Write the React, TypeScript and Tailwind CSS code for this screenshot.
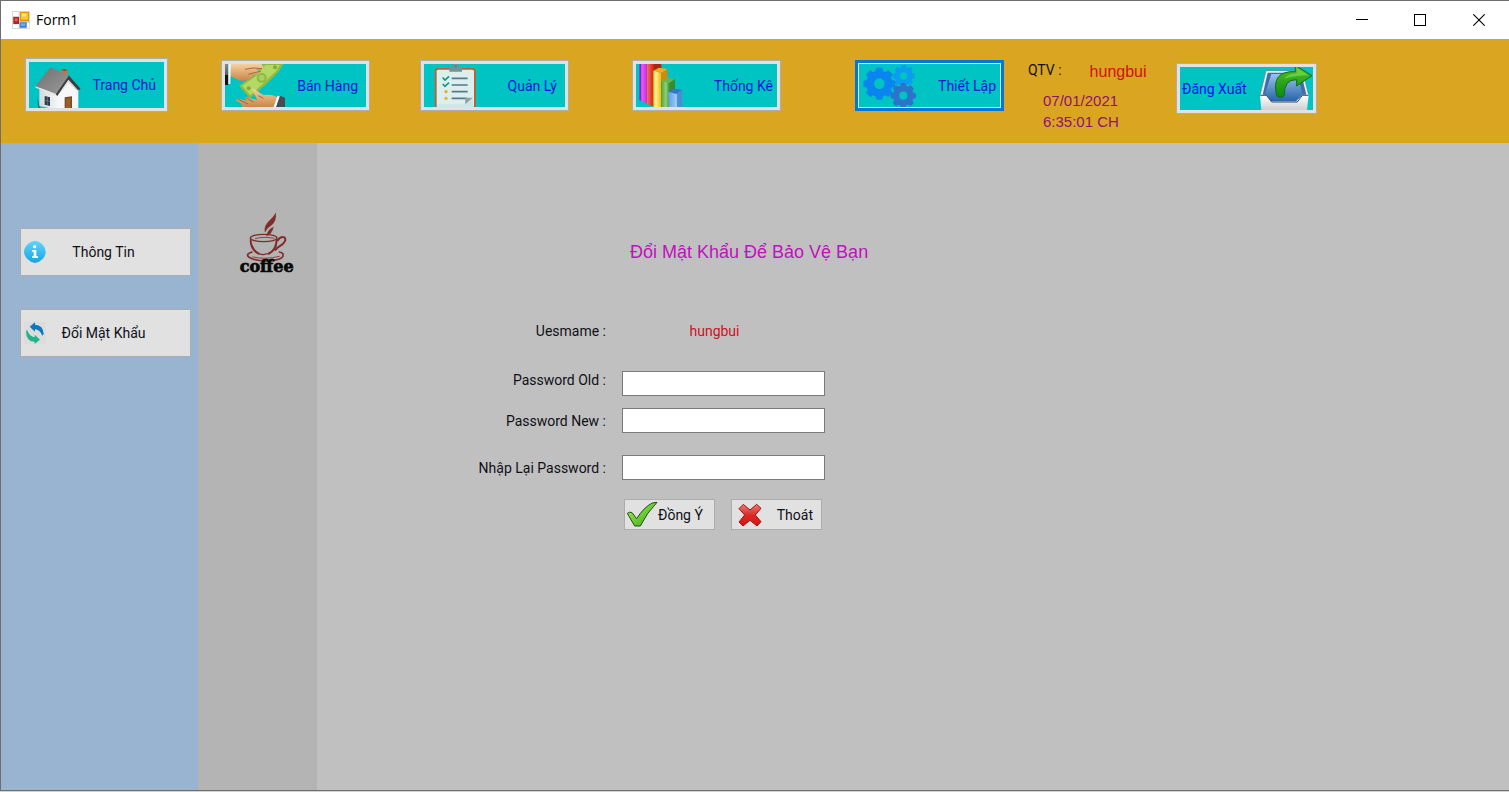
import type { ReactNode } from "react";

function AppIcon() {
  return (
    <svg className="h-[18px] w-[18px]" viewBox="36 30 54 54" aria-hidden="true">
      <rect x="36" y="30" width="54" height="54" rx="4" fill="#d4d4d4" />
      <rect x="39" y="33" width="17" height="12" fill="#fff" />
      <rect x="39" y="70" width="17" height="11" fill="#fff" />
      <rect x="80" y="66" width="8" height="15" fill="#fff" />
      <rect x="40" y="48" width="17" height="21" fill="#b3201e" />
      <rect x="44" y="52" width="9" height="9" fill="#e2605c" />
      <rect x="60" y="33" width="27" height="28" fill="#d99a06" />
      <rect x="63" y="36" width="21" height="20" fill="#fbc82c" />
      <rect x="66" y="38" width="12" height="9" fill="#ffe07a" />
      <rect x="59" y="64" width="21" height="16" fill="#3b78d8" />
      <rect x="62" y="67" width="14" height="8" fill="#74a8f3" />
    </svg>
  );
}

function HouseIcon() {
  return (
    <svg className="h-[46px] w-14 shrink-0" viewBox="87 186 168 138" aria-hidden="true">
      <defs>
        <linearGradient id="roof" x1="0" y1="0" x2="1" y2="1">
          <stop offset="0" stopColor="#6f6f6f" />
          <stop offset="1" stopColor="#9a9a9a" />
        </linearGradient>
        <linearGradient id="wall" x1="0" y1="0" x2="1" y2="0">
          <stop offset="0" stopColor="#d4d8da" />
          <stop offset="1" stopColor="#f8f8f8" />
        </linearGradient>
      </defs>
      <path d="M111 290 l10 34 h-6z" fill="#087a7c" />
      <path d="M184 210 l8 -3 11 3 v22 l-19 -8z" fill="#b97a4b" />
      <path d="M184 210 l8 -3 11 3 -9 4z" fill="#8c4f2b" />
      <path d="M118 258 L178 275 V330 L118 318z" fill="url(#wall)" />
      <path d="M172 278 L206 237 L235 268 V330 H172z" fill="#f7f7f7" />
      <path d="M206 226 L242 267 L234 271 L205 239 L172 288 L166 282z" fill="#3d3d3d" />
      <path d="M206 240 L232 269 L231 272 L205 246 L176 288z" fill="#d0d0d0" />
      <path d="M152 202 L206 227 L168 282 L106 259z" fill="url(#roof)" />
      <path d="M106 259 L168 282 L167 287 L107 263z" fill="#e4e4e4" />
      <path d="M134 288 l16 4 v26 l-16 -4z" fill="#2d3a4a" />
      <path d="M142 290 v26 M134 301 l16 4" stroke="#8f9aa5" strokeWidth="1.5" />
      <path d="M194 292 l22 -3 v38 h-22z" fill="#7b4a1f" />
      <path d="M198 296 l14 -2 v32 h-14z" fill="#94602d" />
    </svg>
  );
}

function CashIcon() {
  return (
    <svg className="h-[43px] w-[60px] shrink-0" viewBox="75 57 180 129" aria-hidden="true">
      <defs>
        <linearGradient id="skin" x1="0" y1="0" x2="0" y2="1">
          <stop offset="0" stopColor="#f6cfa0" />
          <stop offset="1" stopColor="#c98547" />
        </linearGradient>
        <linearGradient id="cuff" x1="0" y1="0" x2="0" y2="1">
          <stop offset="0" stopColor="#8a8a8a" />
          <stop offset="1" stopColor="#2d2d2d" />
        </linearGradient>
      </defs>
      <path d="M190 55 H251 L238 78 L205 112 L150 160 L117 122 L170 85z" fill="#8fbc3e" />
      <path d="M196 60 H240 L229 77 L197 108 L151 151 L126 122 L172 90z" fill="#b3d864" />
      <circle cx="185" cy="99" r="15" fill="#8dba42" />
      <circle cx="185" cy="98" r="9" fill="#a9d05c" />
      <circle cx="225" cy="67" r="6" fill="#7fae35" />
      <circle cx="146" cy="130" r="6" fill="#7fae35" />
      <path d="M92 57 H184 Q194 65 188 72 L168 74 L184 80 Q180 90 160 89 L155 98 Q135 112 116 106 L92 94z" fill="url(#skin)" />
      <path d="M135 73 Q160 66 186 71 M145 88 Q165 82 182 79" fill="none" stroke="#a96634" strokeWidth="3" />
      <path d="M75 57 H84 V120 H75z" fill="url(#cuff)" />
      <path d="M75 90 H85 V120 H75z" fill="#111" />
      <path d="M85 57 H93 L91 117 H85z" fill="#f4f4f4" />
      <path d="M155 133 Q160 128 170 137 L190 150 Q218 146 234 158 L224 187 H136 Q118 184 126 177 L110 168 Q106 160 116 161 L140 168 L134 157 Q138 152 150 160 L172 164z" fill="url(#skin)" />
      <path d="M112 162 L144 177 M136 157 L160 171 M175 152 L190 160" stroke="#a96634" strokeWidth="3" fill="none" />
      <path d="M232 152 L240 154 L228 187 H221z" fill="#fff" />
      <path d="M240 152 L255 158 V187 H228z" fill="#474b52" />
    </svg>
  );
}

function ClipboardIcon() {
  return (
    <svg className="h-[43px] w-[60px] shrink-0" viewBox="72 57 180 129" aria-hidden="true">
      <rect x="104" y="69" width="124" height="128" rx="11" fill="#b4653a" />
      <rect x="110" y="74" width="112" height="113" rx="5" fill="#dcefed" />
      <path d="M112 178 H196 L219 158 V188 H112z" fill="#cfe6e4" />
      <path d="M148 80 V69 Q148 64 156 64 Q158 56 167 56 Q176 56 178 64 Q186 64 186 69 V80z" fill="#7d8f93" />
      <circle cx="167" cy="64" r="4" fill="#0aa9aa" />
      <path d="M128 98 l7 7 12 -11 M128 117 l7 7 12 -11" fill="none" stroke="#119b7c" strokeWidth="5" />
      <circle cx="138" cy="140" r="5" fill="#e2b32d" />
      <circle cx="138" cy="160" r="5" fill="#e2b32d" />
      <path d="M155 100 H203 M155 120 H203 M155 140 H203 M155 160 H200" stroke="#56798d" strokeWidth="5" />
      <path d="M195 158 H218 L196 178z" fill="#8ea1a5" />
    </svg>
  );
}

function BarsIcon() {
  return (
    <svg className="h-[43px] w-[60px] shrink-0" viewBox="78 57 180 129" aria-hidden="true">
      <defs>
        <linearGradient id="violet"><stop offset="0" stopColor="#a90ed0" /><stop offset=".3" stopColor="#e35cf5" /><stop offset="1" stopColor="#c42ae0" /></linearGradient>
        <linearGradient id="red"><stop offset="0" stopColor="#f2705c" /><stop offset="1" stopColor="#cf2212" /></linearGradient>
        <linearGradient id="yellow"><stop offset="0" stopColor="#ffd500" /><stop offset=".3" stopColor="#fff3a0" /><stop offset="1" stopColor="#f4b600" /></linearGradient>
        <linearGradient id="green"><stop offset="0" stopColor="#4da531" /><stop offset=".6" stopColor="#93cf79" /><stop offset="1" stopColor="#3d9426" /></linearGradient>
        <linearGradient id="blue"><stop offset="0" stopColor="#5ba0e4" /><stop offset="1" stopColor="#9cc8f3" /></linearGradient>
      </defs>
      <path d="M90 57 H111 V176 L90 166z" fill="url(#violet)" />
      <path d="M90 57 V166" stroke="#8d12b3" strokeWidth="3" />
      <path d="M111 57 H132 V185 L111 177z" fill="url(#red)" />
      <path d="M132 57 H154 V72 L132 78z" fill="#a92614" />
      <path d="M130 77 L147 68 L172 72 L156 84z" fill="#f7a81e" />
      <path d="M130 77 L154 84 V187 H130z" fill="url(#yellow)" />
      <path d="M154 84 L172 72 V105 L154 114z" fill="#d58a07" />
      <path d="M153 108 L172 98 L195 102 L178 114z" fill="#6ab64d" />
      <path d="M153 108 L178 114 V187 H153z" fill="url(#green)" />
      <path d="M178 114 L195 102 V133 L178 142z" fill="#3a8a28" />
      <path d="M174 140 L190 131 L217 134 L199 147z" fill="#3676c4" />
      <path d="M174 140 L199 147 V187 H176z" fill="url(#blue)" />
      <path d="M199 147 L217 134 V187 H199z" fill="#4a8fd6" />
      <path d="M199 147 V187" stroke="#d7ebff" strokeWidth="2" />
    </svg>
  );
}

const TEETH = [0, 45, 90, 135, 180, 225, 270, 315];

function Gear({ x, y, r, hole, color }: { x: number; y: number; r: number; hole: number; color: string }) {
  const band = (r * 0.8 + hole) / 2;
  return (
    <g transform={`translate(${x} ${y})`}>
      <circle r={band} fill="none" stroke={color} strokeWidth={r * 0.84 - hole} />
      {TEETH.map((a) => (
        <rect key={a} x={-r * 0.22} y={-r} width={r * 0.44} height={r * 0.32} rx={r * 0.1} fill={color} transform={`rotate(${a})`} />
      ))}
    </g>
  );
}

function GearsIcon() {
  return (
    <svg className="h-[43px] w-[60px] shrink-0" viewBox="57 57 180 129" aria-hidden="true">
      <Gear x={191} y={93} r={33} hole={12} color="#0d9cf0" />
      <Gear x={118} y={116} r={48} hole={17} color="#0a84ee" />
      <Gear x={190} y={152} r={38} hole={13} color="#2a74cc" />
    </svg>
  );
}

function LogoutIcon() {
  return (
    <svg className="h-[43px] w-[54px] shrink-0" viewBox="297 65 162 129" aria-hidden="true">
      <defs>
        <linearGradient id="tray" x1="0" y1="0" x2="0" y2="1">
          <stop offset="0" stopColor="#9cc3ea" />
          <stop offset="1" stopColor="#2563ab" />
        </linearGradient>
        <linearGradient id="box" x1="0" y1="0" x2="0" y2="1">
          <stop offset="0" stopColor="#ffffff" />
          <stop offset="1" stopColor="#cfcfcf" />
        </linearGradient>
        <linearGradient id="arrow" x1="0" y1="0" x2="0" y2="1">
          <stop offset="0" stopColor="#4fc424" />
          <stop offset="1" stopColor="#0c8a12" />
        </linearGradient>
      </defs>
      <path d="M318 76 H428 L446 150 L425 172 H322 L300 150z" fill="#eceff2" stroke="#5c7f93" strokeWidth="2" />
      <path d="M323 82 H423 L439 148 H308z" fill="#3a6fab" />
      <path d="M334 86 H412 L428 148 L408 168 H334 L314 148z" fill="url(#tray)" />
      <path d="M300 150 H319 L335 170 H412 L427 150 H446 L441 194 H304z" fill="url(#box)" />
      <path d="M301 150 H319 L335 170 H412 L427 150 H445" fill="none" stroke="#2f4e70" strokeWidth="3" />
      <path d="M406 60 L456 91 L410 122 V103 Q371 102 373 150 Q366 160 350 152 Q332 75 406 79z" fill="url(#arrow)" stroke="#087113" strokeWidth="3" />
      <path d="M410 68 L446 90 Q420 90 372 100 Q385 84 410 84z" fill="#9cec6a" opacity=".45" />
    </svg>
  );
}

function CoffeeLogo() {
  return (
    <svg className="h-[64px] w-[58px]" viewBox="717 36 174 192" role="img" aria-label="coffee">
      <g fill="none" stroke="#7f2d29" strokeLinecap="round">
        <path d="M827 40 Q820 52 808 62 Q791 78 795 96 Q800 84 814 76 Q830 64 827 40z" fill="#7f2d29" strokeWidth="1" />
        <path d="M820 82 Q803 88 800 108 Q816 102 820 82z" fill="#7f2d29" strokeWidth="1" />
        <ellipse cx="791" cy="114" rx="40" ry="11" strokeWidth="4" />
        <path d="M766 116 Q790 108 822 115" strokeWidth="2.5" />
        <path d="M752 120 Q752 148 776 161 M830 120 Q829 148 807 161" strokeWidth="6" />
        <path d="M757 138 Q764 162 790 164 Q822 160 828 136" strokeWidth="4" />
        <path d="M833 121 Q842 108 853 112 Q862 120 846 134 Q832 142 826 150" strokeWidth="6" />
        <path d="M756 156 Q736 162 746 171 Q764 183 797 183 Q838 182 848 170 Q853 158 838 156" strokeWidth="5" />
        <path d="M758 171 Q795 180 838 169" strokeWidth="2.5" />
      </g>
      <text x="719" y="217" fontFamily="'DejaVu Serif', serif" fontWeight="900" fontSize="48" fill="#080808" stroke="#080808" strokeWidth="2">
        coffee
      </text>
    </svg>
  );
}

function InfoIcon() {
  return (
    <svg className="h-6 w-6" viewBox="69 119 72 72" aria-hidden="true">
      <defs>
        <linearGradient id="info" x1="0" y1="0" x2="0" y2="1">
          <stop offset="0" stopColor="#63d4fb" />
          <stop offset="1" stopColor="#14a6e4" />
        </linearGradient>
      </defs>
      <path d="M105 121 Q116 121 127 132 Q137 143 137 155 Q137 166 127 177 Q116 188 105 188 Q94 188 83 177 Q72 166 72 155 Q72 143 83 132 Q94 121 105 121z" fill="url(#info)" />
      <circle cx="104" cy="139" r="5" fill="#fff" />
      <path d="M96 149 H109 V168 H114 V173 H96 V168 H101 V154 H96z" fill="#fff" />
    </svg>
  );
}

function SyncIcon() {
  return (
    <svg className="h-6 w-6" viewBox="69 362 72 72" aria-hidden="true">
      <rect x="73" y="365" width="64" height="66" fill="#dcdcdc" />
      <path d="M89 379 L105 366 V373 Q130 374 131 401 L127 406 Q120 388 105 386 V394z" fill="#0c78bf" />
      <path d="M120 418 L104 431 V424 Q79 424 78 394 L81 388 Q88 408 104 411 V403z" fill="#1fb489" />
    </svg>
  );
}

function CheckIcon() {
  return (
    <svg className="h-7 w-8 shrink-0" viewBox="469 573 96 84" aria-hidden="true">
      <defs>
        <linearGradient id="check" x1="0" y1="0" x2="1" y2="1">
          <stop offset="0" stopColor="#b6f05a" />
          <stop offset="1" stopColor="#29a80f" />
        </linearGradient>
      </defs>
      <path d="M473 610 Q480 603 488 609 L501 626 Q522 592 548 579 L562 577 Q530 610 512 648 H495z" fill="url(#check)" stroke="#1d4d12" strokeWidth="3" strokeLinejoin="round" />
    </svg>
  );
}

function CrossIcon() {
  return (
    <svg className="h-6 w-6 shrink-0" viewBox="804 579 72 72" aria-hidden="true">
      <defs>
        <linearGradient id="cross" x1="0" y1="0" x2="0" y2="1">
          <stop offset="0" stopColor="#ee7a72" />
          <stop offset=".5" stopColor="#d92b26" />
          <stop offset="1" stopColor="#e01010" />
        </linearGradient>
      </defs>
      <path d="M820 583 L840 600 L860 583 L873 595 L856 615 L873 635 L861 648 L840 631 L819 648 L807 636 L824 615 L807 596z" fill="url(#cross)" stroke="#9c1414" strokeWidth="3" strokeLinejoin="round" />
    </svg>
  );
}

interface NavButtonProps {
  label: string;
  className: string;
  icon: ReactNode;
  pad?: string;
  active?: boolean;
}

function NavButton({ label, className, icon, pad = "pr-2", active = false }: NavButtonProps) {
  return (
    <button
      type="button"
      className={`${className} flex shrink-0 bg-[#e1e1e1] ${active ? "border-3 border-[#0078d7] p-px" : "border border-[#adadad] p-[3px]"}`}
    >
      <span className={`flex h-full w-full items-center justify-between overflow-hidden bg-[#00c3c3] text-[#0018d8] ${pad}`}>
        {icon}
        <span>{label}</span>
      </span>
    </button>
  );
}

function SideButton({ label, icon }: { label: string; icon: ReactNode }) {
  return (
    <button type="button" className="flex h-12 w-full items-center border border-[#adadad] bg-[#e1e1e1] pl-0.5 pr-[30px]">
      {icon}
      <span className="grow">{label}</span>
    </button>
  );
}

function Field({ id, label, className = "items-center" }: { id: string; label: string; className?: string }) {
  return (
    <div className={`flex gap-4 ${className}`}>
      <label htmlFor={id} className="w-36 text-right leading-[18px]">
        {label}
      </label>
      <input id={id} type="password" className="h-[25px] w-[203px] border border-[#7a7a7a] bg-white px-1 outline-none" />
    </div>
  );
}

export default function App() {
  return (
    <div className="flex min-h-screen flex-col border-b border-[#d2d2d2] font-['Roboto',sans-serif] text-sm text-[#101018]">
      <div className="flex grow flex-col border border-r-0 border-[#6e6e6e]">
        <header className="flex h-[38px] items-center bg-white pl-[11px]">
          <AppIcon />
          <h1 className="grow pl-1.5 font-['Open_Sans',sans-serif] text-sm text-black">Form1</h1>
          <button type="button" aria-label="Minimize" className="flex h-full w-[58px] items-center justify-center">
            <svg className="h-3 w-3" viewBox="0 0 12 12" shapeRendering="crispEdges" aria-hidden="true">
              <path d="M0 5.5h12" stroke="#000" />
            </svg>
          </button>
          <button type="button" aria-label="Maximize" className="flex h-full w-[58px] items-center justify-center">
            <svg className="h-3 w-3" viewBox="0 0 12 12" fill="none" shapeRendering="crispEdges" aria-hidden="true">
              <rect x=".5" y=".5" width="11" height="11" stroke="#000" />
            </svg>
          </button>
          <button type="button" aria-label="Close" className="flex h-full w-[60px] items-center justify-center">
            <svg className="h-3 w-3" viewBox="0 0 12 12" aria-hidden="true">
              <path d="M.3 .3l11.4 11.4M11.7 .3L.3 11.7" stroke="#000" strokeWidth="1.1" />
            </svg>
          </button>
        </header>

        <nav className="flex h-[104px] items-start bg-[#daa520] pl-6 pt-[21px]">
          <NavButton label="Trang Chủ" className="-mt-0.5 h-[54px] w-[143px]" icon={<HouseIcon />} />
          <NavButton label="Bán Hàng" className="ml-[53px] h-[51px] w-[149px]" icon={<CashIcon />} />
          <NavButton label="Quản Lý" className="ml-[50px] h-[51px] w-[149px]" icon={<ClipboardIcon />} />
          <NavButton label="Thống Kê" className="ml-[63px] h-[51px] w-[149px]" icon={<BarsIcon />} pad="pr-1" />
          <NavButton label="Thiết Lập" className="ml-[74px] h-[51px] w-[149px]" icon={<GearsIcon />} pad="pr-1" active />
          <div className="ml-6 w-[148px] shrink-0">
            <p className="flex gap-7 leading-5">
              <span>QTV :</span>
              <span className="pt-0.5 font-['Liberation_Sans',sans-serif] text-base leading-5 text-[#d01010]">hungbui</span>
            </p>
            <p className="pl-[15px] pt-2 font-['Liberation_Sans',sans-serif] text-[15px] leading-[21px] text-[#901070]">
              07/01/2021
              <br />
              6:35:01 CH
            </p>
          </div>
          <button type="button" className="mt-[3px] flex h-[51px] w-[141px] shrink-0 border border-[#adadad] bg-[#e1e1e1] p-[3px]">
            <span className="flex h-full w-full items-center justify-between overflow-hidden bg-[#00c3c3] pl-0.5 text-[#0010f0]">
              <span>Đăng Xuất</span>
              <LogoutIcon />
            </span>
          </button>
        </nav>

        <div className="flex grow">
          <aside className="flex w-[197px] shrink-0 flex-col gap-[33px] bg-[#99b4d1] pl-[19px] pr-[7px] pt-[85px]">
            <SideButton label="Thông Tin" icon={<InfoIcon />} />
            <SideButton label="Đổi Mật Khẩu" icon={<SyncIcon />} />
          </aside>
          <div className="w-[119px] shrink-0 bg-[#b4b4b4] pl-[41px] pt-[69px]">
            <CoffeeLogo />
          </div>
          <main className="grow bg-[#c0c0c0] pl-[145px] pt-[97px]">
            <form className="w-[363px]" onSubmit={(e) => e.preventDefault()}>
              <h2 className="pl-[168px] font-['Liberation_Sans',sans-serif] text-lg leading-6 whitespace-nowrap text-[#c010c0]">
                Đổi Mật Khẩu Để Bảo Vệ Bạn
              </h2>
              <p className="flex gap-4 pt-[58px] leading-[18px]">
                <span className="w-36 text-right">Uesmame :</span>
                <span className="grow pr-[18px] text-center text-[#d01020]">hungbui</span>
              </p>
              <div className="pt-[31px]">
                <Field id="old" label="Password Old :" className="items-start" />
              </div>
              <div className="pt-3">
                <Field id="new" label="Password New :" />
              </div>
              <div className="pt-[22px]">
                <Field id="repeat" label="Nhập Lại Password :" />
              </div>
              <div className="flex justify-end gap-4 pr-[3px] pt-[19px]">
                <button type="submit" className="flex h-[31px] w-[91px] items-center border border-[#adadad] bg-[#e1e1e1] pl-px">
                  <CheckIcon />
                  Đồng Ý
                </button>
                <button type="button" className="flex h-[31px] w-[91px] items-center justify-between border border-[#adadad] bg-[#e1e1e1] pl-1.5 pr-2">
                  <CrossIcon />
                  Thoát
                </button>
              </div>
            </form>
          </main>
        </div>
      </div>
    </div>
  );
}
